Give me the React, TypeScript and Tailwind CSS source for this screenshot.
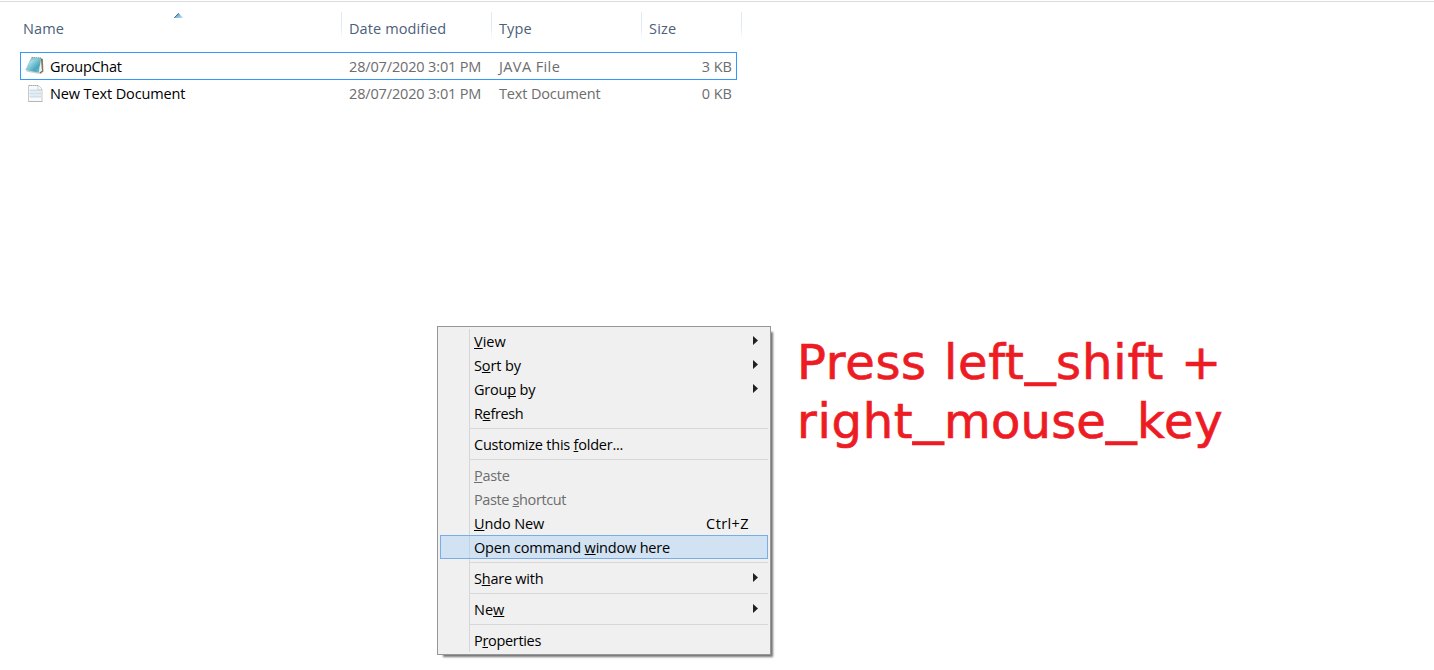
import type { ReactNode } from "react";

type Entry = {
  before?: string;
  key: string;
  after?: string;
  track: string;
  submenu?: boolean;
  shortcut?: string;
  disabled?: boolean;
  active?: boolean;
};

const groups: Entry[][] = [
  [
    { key: "V", after: "iew", track: "tracking-normal", submenu: true },
    { before: "S", key: "o", after: "rt by", track: "tracking-[-0.1px]", submenu: true },
    { before: "Grou", key: "p", after: " by", track: "tracking-[-0.2px]", submenu: true },
    { before: "R", key: "e", after: "fresh", track: "tracking-[-0.35px]" },
  ],
  [{ before: "Customize this ", key: "f", after: "older...", track: "tracking-[-0.23px]" }],
  [
    { key: "P", after: "aste", track: "tracking-[-0.3px]", disabled: true },
    { before: "Paste ", key: "s", after: "hortcut", track: "tracking-[-0.38px]", disabled: true },
    { key: "U", after: "ndo New", track: "tracking-[-0.12px]", shortcut: "Ctrl+Z" },
    { before: "Open command ", key: "w", after: "indow here", track: "tracking-[-0.19px]", active: true },
  ],
  [{ before: "S", key: "h", after: "are with", track: "tracking-[-0.24px]", submenu: true }],
  [{ before: "Ne", key: "w", track: "tracking-normal", submenu: true }],
  [{ before: "P", key: "r", after: "operties", track: "tracking-[-0.32px]" }],
];

function MenuItem({ item }: { item: Entry }) {
  return (
    <div
      className={`flex h-6 ${item.active ? "bg-[#d1e2f2] shadow-[inset_0_0_0_1px_#78aee5]" : ""} ${
        item.disabled ? "text-[#6d6d6d]" : "text-black"
      }`}
    >
      <div className="w-[29px] shrink-0" />
      <div
        className={`flex flex-1 items-center border-l pl-1 ${
          item.active ? "my-px border-[#bdd3e8]" : "border-[#d7d7d7]"
        }`}
      >
        <span className={`flex-1 pt-[2px] whitespace-pre ${item.track}`}>
          {item.before}
          <span className="underline decoration-1 underline-offset-1 [text-decoration-skip-ink:none]">{item.key}</span>
          {item.after}
        </span>
        {item.shortcut && <span className="mr-[19px] pt-[2px] tracking-[0.4px]">{item.shortcut}</span>}
        {item.submenu && (
          <svg className="mr-[10px] mb-px h-[9px] w-[5px]" viewBox="0 0 5 9">
            <path d="M0 0L5 4.5L0 9Z" fill="#212121" />
          </svg>
        )}
      </div>
    </div>
  );
}

function Divider() {
  return (
    <div className="flex h-[7px]">
      <div className="w-[29px] shrink-0" />
      <div className="flex flex-1 items-center border-l border-[#d7d7d7]">
        <div className="h-px flex-1 bg-[#d7d7d7]" />
      </div>
    </div>
  );
}

function ContextMenu() {
  return (
    <div className="absolute top-[326px] left-[437px] w-[334px] border border-[#979797] bg-[#f0f0f0] p-[2px] shadow-[4px_4px_2px_-2px_rgba(0,0,0,0.55)]">
      {groups.map((group, i) => (
        <div key={i}>
          {i > 0 && <Divider />}
          {group.map((item) => (
            <MenuItem key={(item.before ?? "") + item.key + (item.after ?? "")} item={item} />
          ))}
        </div>
      ))}
    </div>
  );
}

function Column({ children, className }: { children?: ReactNode; className: string }) {
  return (
    <div className={`flex h-[28px] ${className}`}>
      <div className="flex-1 pt-[7px]">{children}</div>
      <div className="w-px bg-gradient-to-b from-[#dfeaf4] via-[#dfe9f2] to-white" />
    </div>
  );
}

function JavaFileIcon() {
  return (
    <svg className="h-5 w-5" viewBox="0 0 20 20">
      <defs>
        <linearGradient id="cover" x1="0" y1="0" x2="1" y2="1">
          <stop offset="0" stopColor="#8fb9c6" />
          <stop offset="0.4" stopColor="#8ed0dc" />
          <stop offset="0.7" stopColor="#4aa6bd" />
          <stop offset="1" stopColor="#79c6d6" />
        </linearGradient>
      </defs>
      <path d="M15.5 2.2L17.8 3L18.7 15.5L15.5 18L14 17Z" fill="#c1b48e" />
      <path d="M15.5 2.2L17.6 3.2L17.8 15.6L15.2 17.6Z" fill="#695d48" />
      <path d="M0.3 14.2L13.6 16.6L15.4 18L2 15.7Z" fill="#c9d0d4" />
      <path d="M6.5 1.2L16 1.8L13.8 16.8L0.3 14.1Z" fill="url(#cover)" />
      <path d="M6.8 1.4L16 2" stroke="#7b8b8e" strokeWidth="1" strokeDasharray="1 1" />
      <path d="M16 2.5L17 15L14 16.6Z" fill="#edf3f2" />
      <path d="M6 4.5L3.6 9.5L9.5 4Z" fill="#b9dfe6" opacity="0.7" />
    </svg>
  );
}

function TextFileIcon() {
  return (
    <svg className="h-5 w-5" viewBox="0 0 20 20">
      <path d="M3.5 1.5H13.5L17 5V17.5H3.5Z" fill="#f8f9fa" stroke="#c9c9c9" />
      <path d="M4 1.5H13.5" stroke="#a6a6a6" strokeDasharray="1 1" />
      <path d="M13 1.5V5.5H17" fill="#fff" stroke="#c1c1c1" strokeWidth="0.8" />
      <path d="M4.5 6.5H16M4.5 9.5H16M4.5 12.5H16" stroke="#cfdfec" strokeWidth="2" />
      <path d="M3.5 17.5H17.5" stroke="#b5b5b5" />
    </svg>
  );
}

function Underscore() {
  return (
    <span className="inline-block w-[31px] origin-left -translate-y-[4px] scale-x-[1.27]">_</span>
  );
}

export default function App() {
  return (
    <div className="relative h-[670px] w-[1434px] overflow-hidden bg-white pt-px font-['Open_Sans','Noto_Sans',sans-serif] text-[14.5px] leading-5">
      <div className="h-px bg-[#dadbdc]" />
      <div className="relative mt-[10px] flex text-[#4c607a]">
        <Column className="w-[342px] pl-[23px] tracking-[0.1px]">Name</Column>
        <Column className="w-[150px] pl-[7px] tracking-[0.1px]">Date modified</Column>
        <Column className="w-[150px] pl-[7px] tracking-[0.1px]">Type</Column>
        <Column className="w-[100px] pl-[7px] tracking-[0.2px]">Size</Column>
        <svg className="absolute top-px left-[174px] h-[5px] w-[9px]" viewBox="0 0 9 5">
          <defs>
            <linearGradient id="sort" x1="0" y1="0" x2="1" y2="1">
              <stop offset="0" stopColor="#2d6189" />
              <stop offset="0.5" stopColor="#7fb4d8" />
              <stop offset="1" stopColor="#b9e2fa" />
            </linearGradient>
          </defs>
          <path d="M4.5 0L9 5H0Z" fill="url(#sort)" />
          <path d="M4.5 0.4L0.3 4.8" stroke="#315f80" strokeWidth="0.8" />
        </svg>
      </div>
      <div className="mt-[12px] ml-5 w-[717px] text-[#6d6d6d]">
        <div className="flex h-7 items-center border border-[#3399ff] pl-1">
          <JavaFileIcon />
          <span className="ml-[5px] w-[299px] pt-[2px] tracking-[-0.3px] text-black">GroupChat</span>
          <span className="w-[150px] pt-[2px] tracking-[-0.15px]">28/07/2020 3:01 PM</span>
          <span className="w-[150px] pt-[2px] tracking-[0.4px]">JAVA File</span>
          <span className="w-[83px] pt-[2px] text-right tracking-normal">3 KB</span>
        </div>
        <div className="flex h-[27px] items-center pl-[5px]">
          <TextFileIcon />
          <span className="ml-[5px] w-[299px] tracking-[-0.12px] text-black">New Text Document</span>
          <span className="w-[150px] tracking-[-0.15px]">28/07/2020 3:01 PM</span>
          <span className="w-[150px] tracking-[-0.15px]">Text Document</span>
          <span className="w-[83px] text-right tracking-normal">0 KB</span>
        </div>
      </div>
      <ContextMenu />
      <div className="absolute top-[333px] left-[797px] font-['DejaVu_Sans',sans-serif] text-[48px] leading-[59px] whitespace-nowrap text-[#ed1c24] [-webkit-text-stroke:0.7px_#ed1c24]">
        <div className="flex whitespace-pre">
          <span className="w-[147px] tracking-[0.7px]">Press </span>
          <span className="w-[81px] tracking-[0.7px]">left</span>
          <Underscore />
          <span className="w-[125px] tracking-[0.9px]">shift</span>
          <span>+</span>
        </div>
        <div className="flex">
          <span className="w-[116px] tracking-[0.7px]">right</span>
          <Underscore />
          <span className="w-[162px] tracking-[0.2px]">mouse</span>
          <Underscore />
          <span className="tracking-[0.8px]">key</span>
        </div>
      </div>
    </div>
  );
}
